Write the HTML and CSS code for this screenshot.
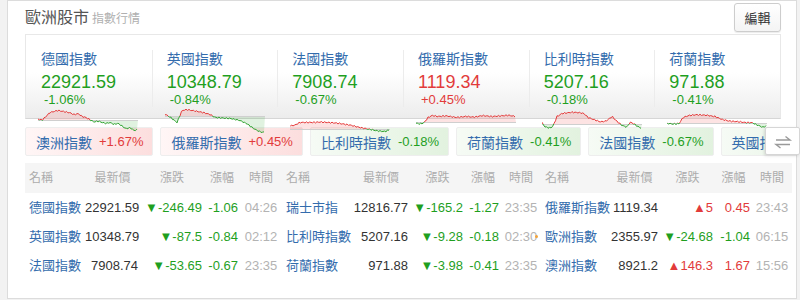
FILE: index.html
```html
<!DOCTYPE html>
<html lang="zh-Hant">
<head>
    <meta charset="utf-8">
    <title>歐洲股市</title>
    <link rel="stylesheet" href="styles.css">
</head>
<body>
    <div class="panel">
        <div class="panel-head">
            <h2 class="title">歐洲股市<small>指數行情</small></h2>
            <button class="edit">編輯</button>
        </div>

        <div class="quotes">
            <div class="quote down">
                <a class="q-name">德國指數</a>
                <div class="q-price">22921.59</div>
                <div class="q-pct">-1.06%</div>
            </div>
            <div class="quote down">
                <a class="q-name">英國指數</a>
                <div class="q-price">10348.79</div>
                <div class="q-pct">-0.84%</div>
            </div>
            <div class="quote down">
                <a class="q-name">法國指數</a>
                <div class="q-price">7908.74</div>
                <div class="q-pct">-0.67%</div>
            </div>
            <div class="quote up">
                <a class="q-name">俄羅斯指數</a>
                <div class="q-price">1119.34</div>
                <div class="q-pct">+0.45%</div>
            </div>
            <div class="quote down">
                <a class="q-name">比利時指數</a>
                <div class="q-price">5207.16</div>
                <div class="q-pct">-0.18%</div>
            </div>
            <div class="quote down">
                <a class="q-name">荷蘭指數</a>
                <div class="q-price">971.88</div>
                <div class="q-pct">-0.41%</div>
            </div>
        </div>

        <div class="chip-bar">
            <div class="chips">
                <div class="chip up"><span class="chip-name">澳洲指數</span><span class="chip-pct">+1.67%</span></div>
                <div class="chip up"><span class="chip-name">俄羅斯指數</span><span class="chip-pct">+0.45%</span></div>
                <div class="chip down"><span class="chip-name">比利時指數</span><span class="chip-pct">-0.18%</span></div>
                <div class="chip down"><span class="chip-name">荷蘭指數</span><span class="chip-pct">-0.41%</span></div>
                <div class="chip down"><span class="chip-name">法國指數</span><span class="chip-pct">-0.67%</span></div>
                <div class="chip down"><span class="chip-name">英國指數</span><span class="chip-pct">-0.84%</span></div>
            </div>
            <button class="swap">
                <svg width="20" height="20" viewBox="0 0 20 20" fill="none" stroke="#9a9a9a" stroke-width="1.4">
                    <path d="M3 8H17L12.5 4.5"/>
                    <path d="M17 12.5H3L7.5 16"/>
                </svg>
            </button>
        </div>

        <div class="table">
            <div class="tr thead">
                <div class="name">名稱</div><div>最新價</div><div>漲跌</div><div>漲幅</div><div>時間</div>
                <div class="name">名稱</div><div>最新價</div><div>漲跌</div><div>漲幅</div><div>時間</div>
                <div class="name">名稱</div><div>最新價</div><div>漲跌</div><div>漲幅</div><div>時間</div>
            </div>
            <div class="tr">
                <a class="name">德國指數</a><div class="num">22921.59</div><div class="num down">▼-246.49</div><div class="num down">-1.06</div><div class="time">04:26</div>
                <a class="name">瑞士市指</a><div class="num">12816.77</div><div class="num down">▼-165.2</div><div class="num down">-1.27</div><div class="time">23:35</div>
                <a class="name">俄羅斯指數</a><div class="num">1119.34</div><div class="num up">▲5</div><div class="num up">0.45</div><div class="time">23:43</div>
            </div>
            <div class="tr">
                <a class="name">英國指數</a><div class="num">10348.79</div><div class="num down">▼-87.5</div><div class="num down">-0.84</div><div class="time">02:12</div>
                <a class="name">比利時指數</a><div class="num">5207.16</div><div class="num down">▼-9.28</div><div class="num down">-0.18</div><div class="time">02:30<span class="dot"></span></div>
                <a class="name">歐洲指數</a><div class="num">2355.97</div><div class="num down">▼-24.68</div><div class="num down">-1.04</div><div class="time">06:15</div>
            </div>
            <div class="tr">
                <a class="name">法國指數</a><div class="num">7908.74</div><div class="num down">▼-53.65</div><div class="num down">-0.67</div><div class="time">23:35</div>
                <a class="name">荷蘭指數</a><div class="num">971.88</div><div class="num down">▼-3.98</div><div class="num down">-0.41</div><div class="time">23:35</div>
                <a class="name">澳洲指數</a><div class="num">8921.2</div><div class="num up">▲146.3</div><div class="num up">1.67</div><div class="time">15:56</div>
            </div>
        </div>
    </div>

    <script>
        // intraday lines: [previous close, key points (x, y)] in a 100x26 box
        const sparks = [
            [12, [[0,11],[4,12],[8,8],[12,4],[16,3],[20,2],[24,3],[28,4],[32,5],[36,7],[40,6],[44,9],[48,10],[52,12],[56,14],[60,13],[64,14],[68,15],[72,14],[76,16],[80,15],[84,18],[88,21],[92,20],[96,23],[100,22]]],
            [8, [[0,6],[6,10],[12,15],[17,3],[22,2],[30,3],[38,4],[45,6],[50,9],[58,10],[66,11],[75,13],[82,16],[88,20],[94,23],[98,24],[100,23]]],
            [21, [[0,18],[5,17],[10,14],[20,14],[30,14],[40,15],[50,16],[60,17],[70,19],[80,21],[88,23],[95,24],[100,22]]],
            [14, [[0,15],[4,16],[8,15],[12,10],[16,8],[22,9],[30,8],[40,9],[50,8],[58,9],[66,8],[76,9],[86,8],[92,7],[100,8]]],
            [16, [[0,15],[3,19],[8,20],[11,18],[15,8],[20,5],[30,4],[38,5],[42,6],[46,10],[52,12],[58,14],[64,13],[70,8],[74,12],[80,17],[85,19],[88,14],[92,16],[96,19],[100,21]]],
            [15, [[0,15],[6,16],[12,16],[16,10],[22,8],[30,7],[40,7],[48,8],[55,11],[62,13],[70,14],[78,15],[85,15],[90,17],[96,19],[100,17]]]
        ];

        function valueAt(pts, x){
            for (let k = 1; k < pts.length; k++){
                if (x <= pts[k][0]){
                    const a = pts[k - 1], b = pts[k];
                    return a[1] + (b[1] - a[1]) * (x - a[0]) / (b[0] - a[0]);
                }
            }
            return pts[pts.length - 1][1];
        }

        document.querySelectorAll('.quote').forEach(function(card, i){
            const base = sparks[i][0];
            const pts = sparks[i][1];
            let line = "";
            for (let x = 0; x <= 100; x += 1.5){
                let y = valueAt(pts, x) + Math.sin(x * 1.7 + i) * 0.7 + Math.sin(x * 4.3 + i * 3) * 0.5;
                y = Math.min(25.5, Math.max(0.5, y));
                line += (x ? "L" : "M") + x.toFixed(1) + "," + y.toFixed(1);
            }
            const area = "M0," + base + line.replace("M", "L") + "L100," + base + "Z";

            card.insertAdjacentHTML('beforeend',
                '<svg class="spark" width="100" height="26" viewBox="0 0 100 26">' +
                '<defs><clipPath id="hi' + i + '"><rect width="100" height="' + base + '"/></clipPath>' +
                '<clipPath id="lo' + i + '"><rect y="' + base + '" width="100" height="' + (26 - base) + '"/></clipPath></defs>' +
                '<path d="' + area + '" fill="rgba(240,80,80,.16)" clip-path="url(#hi' + i + ')"/>' +
                '<path d="' + area + '" fill="rgba(60,175,60,.16)" clip-path="url(#lo' + i + ')"/>' +
                '<line x1="0" x2="100" y1="' + (base + 0.5) + '" y2="' + (base + 0.5) + '" stroke="#cfcfcf"/>' +
                '<path d="' + line + '" fill="none" stroke="#e53b3b" clip-path="url(#hi' + i + ')"/>' +
                '<path d="' + line + '" fill="none" stroke="#33a533" clip-path="url(#lo' + i + ')"/>' +
                '</svg>');
        });
    </script>
</body>
</html>
```

FILE: styles.css
```css
* {
    box-sizing: border-box;
}

body {
    margin: 0;
    background: #f2f2f2;
    font-family: "Liberation Sans", "Noto Sans CJK TC", sans-serif;
    color: #333;
}

a {
    color: #336cad;
    text-decoration: none;
}

.panel {
    width: 790px;
    height: 299px;
    margin-left: 7px;
    padding: 0 15px 0 17px;
    background: #fff;
    border: 1px solid #dcdcdc;
}

/* title bar */
.panel-head {
    display: flex;
    justify-content: space-between;
    align-items: flex-start;
    height: 33px;
    padding-top: 2px;
}

.title {
    margin: 0;
    font-size: 16px;
    font-weight: normal;
    line-height: 29px;
    color: #555;
}

.title small {
    margin-left: 3px;
    font-size: 12px;
    color: #b0b0b0;
}

.edit {
    width: 47px;
    height: 29px;
    padding: 0;
    font-family: inherit;
    font-size: 13px;
    color: #333;
    background: linear-gradient(#fff, #f4f4f4);
    border: 1px solid #cdcdcd;
    border-radius: 3px;
    box-shadow: 0 1px 1px rgba(0, 0, 0, .08);
}

/* top quotes */
.quotes {
    display: flex;
    width: 756px;
    height: 85px;
    background: linear-gradient(#fff 45%, #ececec);
    border: 1px solid #e8e8e8;
    border-bottom-color: #d6d6d6;
}

.quote {
    position: relative;
    flex: 1;
    margin: 15px 0 11px;
    padding-left: 14px;
    border-left: 1px solid #ececec;
}

.quote:first-child {
    padding-left: 15px;
    border-left: 0;
}

.q-name {
    display: block;
    margin-top: 1px;
    font-size: 14px;
    line-height: 16px;
}

.q-price {
    margin-top: 5px;
    font-size: 18px;
    line-height: 20px;
}

.q-pct {
    padding-left: 3px;
    font-size: 13px;
    line-height: 16px;
}

.quote.down .q-price, .quote.down .q-pct {
    color: #1f9f1f;
}

.quote.up .q-price, .quote.up .q-pct {
    color: #e23b3b;
}

.spark {
    position: absolute;
    z-index: 1;
    left: 12px;
    top: 58px;
}

.chip-bar {
    position: relative;
    margin: 8px -15px 0 0;
}

.chips {
    display: flex;
    gap: 7px;
    overflow: hidden;
}

.chip {
    flex: none;
    display: flex;
    align-items: center;
    gap: 7px;
    height: 29px;
    padding: 0 9px 0 10px;
    border: 1px solid #eee;
    border-radius: 2px;
}

.chip.up {
    background: linear-gradient(to right, #fff6f6, #fcdede);
}

.chip.down {
    background: linear-gradient(to right, #f6fbf5, #e2f2df);
}

.chip-name {
    font-size: 14px;
    color: #336cad;
}

.chip-pct {
    font-size: 13px;
}

.chip.up .chip-pct {
    color: #e23b3b;
}

.chip.down .chip-pct {
    color: #1f9f1f;
}

.swap {
    position: absolute;
    z-index: 2;
    top: 0;
    right: -4px;
    width: 35px;
    height: 28px;
    padding: 4px 0 0;
    background: #fff;
    border: 1px solid #d6d6d6;
    border-radius: 2px;
    box-shadow: -1px 1px 3px rgba(0, 0, 0, .12);
}

/* table */
.table {
    margin: 7px -11px 0 0;
}

.tr {
    display: grid;
    grid-template-columns: 60px 55px 64px 36px 42px 70px 58px 55px 36px 40px 68px 51px 55px 37px 40px;
    height: 29px;
    font-size: 13px;
    line-height: 29px;
    white-space: nowrap;
}

.thead {
    height: 30px;
    line-height: 30px;
    font-size: 12px;
    color: #acacac;
    text-align: center;
    background: #f5f5f5;
}

.name {
    padding-left: 4px;
    text-align: left;
}

.num {
    padding-right: 2px;
    text-align: right;
}

.time {
    position: relative;
    text-align: center;
    color: #b3b3b3;
}

.num.down {
    color: #1f9f1f;
}

.num.up {
    color: #e23b3b;
}

.dot {
    position: absolute;
    right: 3px;
    top: 13px;
    width: 3px;
    height: 3px;
    border-radius: 50%;
    background: #f2a33a;
}
```
